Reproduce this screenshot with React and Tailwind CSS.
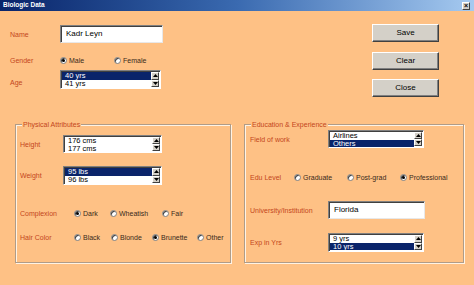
import React from "react";

const LBL = "text-[#c4461c] text-[7px] leading-none";

function Radio({ checked }) {
  return (
    <span className="w-[7px] h-[7px] rounded-full bg-white border border-[#808080] shadow-[inset_1px_1px_0_#404040] flex items-center justify-center shrink-0">
      {checked && <span className="w-[3px] h-[3px] rounded-full bg-black" />}
    </span>
  );
}

function Opt({ label, checked, w }) {
  return (
    <div className="flex items-center gap-[2px] shrink-0" style={{ width: w }}>
      <Radio checked={checked} />
      <span className="text-[7px] leading-none text-[#3a2a1a]">{label}</span>
    </div>
  );
}

function Arrow({ up }) {
  return (
    <div className="flex-1 w-[8px] bg-[#d4d0c8] border-t border-l border-t-white border-l-white border-b border-r border-b-[#404040] border-r-[#404040] flex items-center justify-center">
      <svg width="5" height="3" viewBox="0 0 5 3">
        {up ? <polygon points="2.5,0 5,3 0,3" fill="#000" /> : <polygon points="0,0 5,0 2.5,3" fill="#000" />}
      </svg>
    </div>
  );
}

function ListBox({ items, sel, w, h }) {
  return (
    <div
      className="flex bg-white border border-t-[#808080] border-l-[#808080] border-b-white border-r-white shadow-[inset_1px_1px_0_#404040] shrink-0 p-[1px]"
      style={{ width: w, height: h }}
    >
      <div className="flex-1 flex flex-col">
        {items.map((it, i) => (
          <div
            key={i}
            className={
              "flex-1 flex items-center pl-[3px] text-[7.5px] leading-none " +
              (i === sel ? "bg-[#0a246a] text-white" : "text-black")
            }
          >
            {it}
          </div>
        ))}
      </div>
      <div className="flex flex-col">
        <Arrow up />
        <Arrow />
      </div>
    </div>
  );
}

function TextBox({ value, w }) {
  return (
    <div
      className="h-[18px] bg-white border border-t-[#808080] border-l-[#808080] border-b-[#e8e8e8] border-r-[#e8e8e8] shadow-[inset_1px_1px_0_#404040] flex items-center pl-[5px] text-[8px] leading-none text-black shrink-0"
      style={{ width: w }}
    >
      {value}
    </div>
  );
}

function Btn({ children }) {
  return (
    <div className="w-[67px] h-[18px] bg-[#d4d0c8] border border-t-white border-l-white border-b-[#404040] border-r-[#404040] shadow-[inset_-1px_-1px_0_#808080] flex items-center justify-center text-[8px] leading-none text-black">
      {children}
    </div>
  );
}

function Group({ title, w, children, pl }) {
  return (
    <div
      className="relative h-[139px] border border-[#b09c88] shadow-[inset_1px_1px_0_#fff3e4,1px_1px_0_#fff3e4] shrink-0"
      style={{ width: w }}
    >
      <span className="absolute -top-[4px] left-[6px] px-[1px] bg-[#fec185] text-[7px] leading-none text-[#c4461c]">
        {title}
      </span>
      <div className="flex flex-col" style={{ paddingLeft: pl }}>
        {children}
      </div>
    </div>
  );
}

export default function App() {
  return (
    <div className="w-[474px] h-[285px] bg-[#fec185] overflow-hidden flex flex-col font-['Liberation_Sans',Arial,sans-serif]">
      {/* title bar */}
      <div className="h-[11px] bg-linear-to-r from-[#0a246a] via-[#3a6ab0] to-[#a6caf0] flex items-center pl-[3px] pr-[4px] shrink-0">
        <span className="text-white font-bold text-[6.5px] leading-none">Biologic Data</span>
        <div className="ml-auto w-[8px] h-[8px] bg-[#d4d0c8] border border-t-white border-l-white border-b-[#404040] border-r-[#404040] flex items-center justify-center text-[7px] leading-none font-bold text-black">
          ×
        </div>
      </div>

      {/* top section */}
      <div className="flex pt-[13px]">
        <div className="flex flex-col pl-[10px]">
          <div className="flex items-center h-[18px] mt-[1px]">
            <span className={LBL + " w-[50px]"}>Name</span>
            <TextBox value="Kadr Leyn" w={103} />
          </div>
          <div className="flex items-center h-[10px] mt-[12px]">
            <span className={LBL + " w-[50px]"}>Gender</span>
            <Opt label="Male" checked w={54} />
            <Opt label="Female" w={50} />
          </div>
          <div className="flex items-start mt-[5px]">
            <span className={LBL + " w-[50px] pt-[9px]"}>Age</span>
            <ListBox items={["40 yrs", "41 yrs"]} sel={0} w={101} h={19} />
          </div>
        </div>
        <div className="ml-auto mr-[35px] flex flex-col">
          <Btn>Save</Btn>
          <div className="mt-[10px]">
            <Btn>Clear</Btn>
          </div>
          <div className="mt-[9px]">
            <Btn>Close</Btn>
          </div>
        </div>
      </div>

      {/* groups */}
      <div className="flex mt-[27px] pl-[15px] gap-[13px]">
        <Group title="Physical Attributes" w={216} pl={4}>
          <div className="flex items-center mt-[10px]">
            <span className={LBL + " w-[43px]"}>Height</span>
            <ListBox items={["176 cms", "177 cms"]} sel={-1} w={99} h={18} />
          </div>
          <div className="flex items-center mt-[13px]">
            <span className={LBL + " w-[43px]"}>Weight</span>
            <ListBox items={["95 lbs", "96 lbs"]} sel={0} w={99} h={19} />
          </div>
          <div className="flex items-center h-[10px] mt-[23px]">
            <span className={LBL + " w-[54px]"}>Complexion</span>
            <Opt label="Dark" checked w={36} />
            <Opt label="Wheatish" w={52} />
            <Opt label="Fair" w={30} />
          </div>
          <div className="flex items-center h-[10px] mt-[14px]">
            <span className={LBL + " w-[54px]"}>Hair Color</span>
            <Opt label="Black" w={37} />
            <Opt label="Blonde" w={41} />
            <Opt label="Brunette" checked w={45} />
            <Opt label="Other" w={30} />
          </div>
        </Group>
        <Group title="Education & Experience" w={220} pl={5}>
          <div className="flex items-center mt-[5px]">
            <span className={LBL + " w-[78px]"}>Field of work</span>
            <ListBox items={["Airlines", "Others"]} sel={1} w={96} h={18} />
          </div>
          <div className="flex items-center h-[10px] mt-[24px]">
            <span className={LBL + " w-[44px]"}>Edu Level</span>
            <Opt label="Graduate" w={53} />
            <Opt label="Post-grad" w={53} />
            <Opt label="Professional" checked w={60} />
          </div>
          <div className="flex items-center mt-[19px]">
            <span className={LBL + " w-[78px]"}>University/Institution</span>
            <TextBox value="Florida" w={97} />
          </div>
          <div className="flex items-center mt-[14px]">
            <span className={LBL + " w-[78px]"}>Exp in Yrs</span>
            <ListBox items={["9 yrs", "10 yrs"]} sel={1} w={96} h={19} />
          </div>
        </Group>
      </div>
    </div>
  );
}
